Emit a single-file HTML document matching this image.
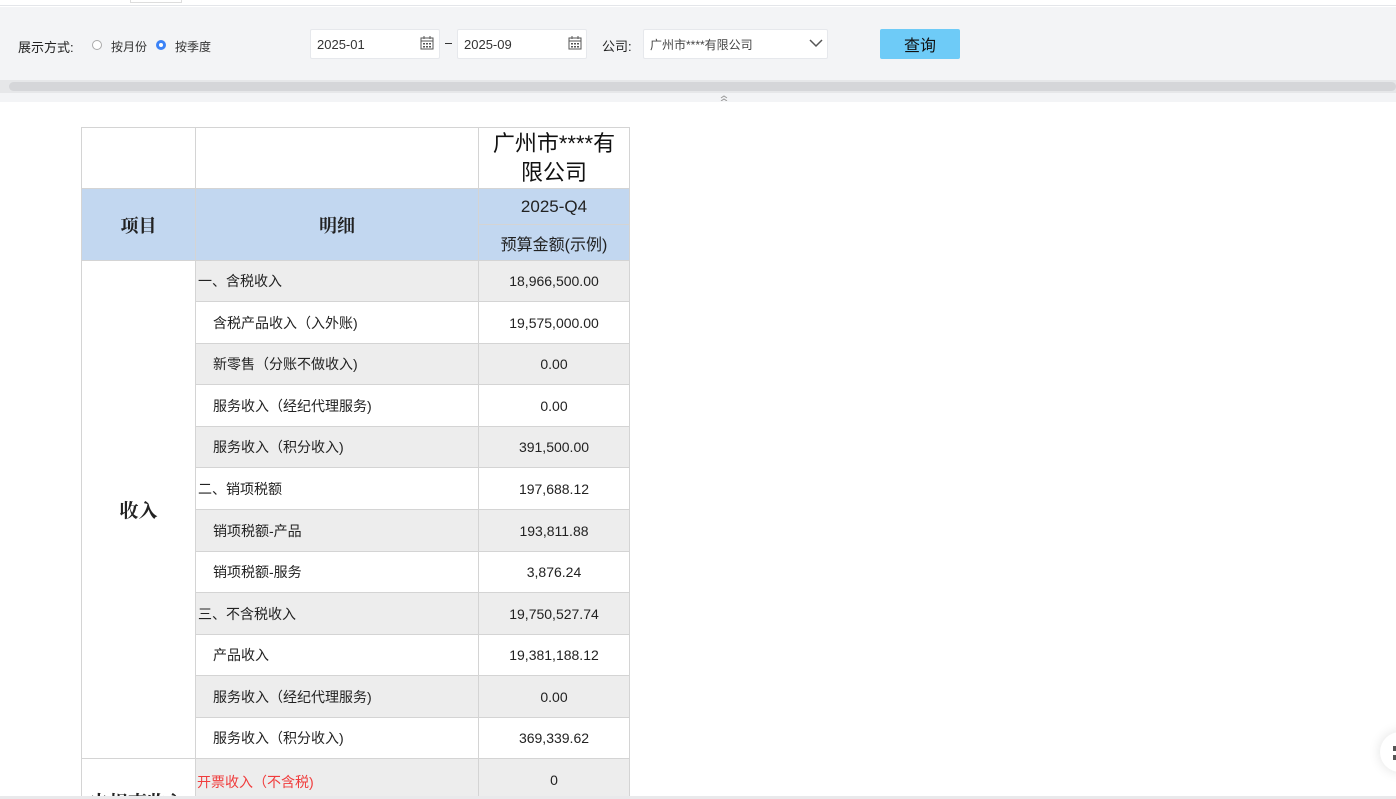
<!DOCTYPE html>
<html><head><meta charset="utf-8"><style>
*{margin:0;padding:0;box-sizing:border-box}
html,body{width:1396px;height:799px;overflow:hidden}
body{background:#fff;position:relative;font-family:"Liberation Sans","Noto Sans CJK SC",sans-serif;color:#222}
.a{position:absolute}
.c{position:absolute;border:1px solid #d4d4d4;display:flex;align-items:center;font-size:14px}
.num{justify-content:center}
.g{background:#ededed}
.hd{background:#c2d7f0}
.inp{position:absolute;top:29px;height:30px;background:#fff;border:1px solid #e6e8ec;border-radius:2px;font-size:13px;color:#333;padding-left:6px;display:flex;align-items:center}
</style></head><body>
<div class="a" style="left:0;top:0;width:1396px;height:6px;background:#fff;border-bottom:1px solid #e4e6ea"></div>
<div class="a" style="left:130px;top:0;width:52px;height:3px;border:1px solid #ddd;border-top:none"></div>
<div class="a" style="left:0;top:7px;width:1396px;height:73px;background:#f3f4f6"></div>
<div class="a" style="left:18px;top:37px;font-size:13px;color:#222">展示方式:</div>
<div class="a" style="left:92px;top:40px;width:10px;height:10px;border:1px solid #aaa;border-radius:50%;background:#fff"></div>
<div class="a" style="left:111px;top:38px;font-size:12px;color:#333">按月份</div>
<div class="a" style="left:156px;top:40px;width:10px;height:10px;border:3px solid #3b82f6;border-radius:50%;background:#fff"></div>
<div class="a" style="left:175px;top:38px;font-size:12px;color:#333">按季度</div>
<div class="inp" style="left:310px;width:130px">2025-01</div>
<svg class="a" style="left:420px;top:36px" width="14" height="14" viewBox="0 0 14 14"><rect x="1" y="2" width="12" height="11" fill="none" stroke="#555"/><path d="M4 0v3M10 0v3M1 5h12" stroke="#555"/><g fill="#555"><rect x="3" y="7" width="2" height="1.5"/><rect x="6" y="7" width="2" height="1.5"/><rect x="9" y="7" width="2" height="1.5"/><rect x="3" y="10" width="2" height="1.5"/><rect x="6" y="10" width="2" height="1.5"/><rect x="9" y="10" width="2" height="1.5"/></g></svg>
<div class="a" style="left:445px;top:43px;width:7px;height:1px;background:#333"></div>
<div class="inp" style="left:457px;width:130px">2025-09</div>
<svg class="a" style="left:568px;top:36px" width="14" height="14" viewBox="0 0 14 14"><rect x="1" y="2" width="12" height="11" fill="none" stroke="#555"/><path d="M4 0v3M10 0v3M1 5h12" stroke="#555"/><g fill="#555"><rect x="3" y="7" width="2" height="1.5"/><rect x="6" y="7" width="2" height="1.5"/><rect x="9" y="7" width="2" height="1.5"/><rect x="3" y="10" width="2" height="1.5"/><rect x="6" y="10" width="2" height="1.5"/><rect x="9" y="10" width="2" height="1.5"/></g></svg>
<div class="a" style="left:602px;top:36px;font-size:13px">公司:</div>
<div class="inp" style="left:643px;width:185px;font-size:12px;color:#444">广州市****有限公司</div>
<svg class="a" style="left:809px;top:39px" width="14" height="9" viewBox="0 0 14 9"><path d="M1 1l6 6 6-6" fill="none" stroke="#555" stroke-width="1.5"/></svg>
<div class="a" style="left:880px;top:29px;width:80px;height:30px;background:#6ecbf7;border-radius:2px;font-size:16px;display:flex;align-items:center;justify-content:center;color:#111">查询</div>
<div class="a" style="left:0;top:80px;width:1396px;height:13px;background:#e6e7e9"></div>
<div class="a" style="left:9px;top:82px;width:1387px;height:9px;background:#d5d6d9;border-radius:5px"></div>
<div class="a" style="left:0;top:93px;width:1396px;height:9px;background:#f3f4f6"></div>
<svg class="a" style="left:720px;top:95px" width="8" height="6" viewBox="0 0 8 6"><path d="M1 3l3-2 3 2M1 6l3-2 3 2" fill="none" stroke="#999"/></svg>

<div class="c" style="left:81px;top:127px;width:115px;height:62px"></div>
<div class="c" style="left:195px;top:127px;width:284px;height:62px"></div>
<div class="c num" style="left:478px;top:127px;width:152px;height:62px;font-size:22px;line-height:29px;text-align:center;color:#111">广州市****有<br>限公司</div>
<div class="c num hd" style="left:81px;top:188px;width:115px;height:73px;font-size:18px;font-weight:bold;font-family:'Noto Serif CJK SC',serif">项目</div>
<div class="c num hd" style="left:195px;top:188px;width:284px;height:73px;font-size:18px;font-weight:bold;font-family:'Noto Serif CJK SC',serif">明细</div>
<div class="c num hd" style="left:478px;top:188px;width:152px;height:37px;font-size:17px">2025-Q4</div>
<div class="c num hd" style="left:478px;top:224px;width:152px;height:37px;font-size:16px">预算金额(示例)</div>
<div class="c num" style="left:81px;top:260px;width:115px;height:499px;font-size:19px;font-weight:bold;font-family:'Noto Serif CJK SC',serif">收入</div>
<div class="c" style="left:81px;top:758px;width:115px;height:41px;overflow:hidden"><div class="a" style="left:8px;top:29px;font-size:19px;font-weight:bold;font-family:'Noto Serif CJK SC',serif;white-space:nowrap">电根事收入</div></div>

<div class="c g" style="left:195px;top:260px;width:284px;height:42px;padding-left:2px">一、含税收入</div><div class="c num g" style="left:478px;top:260px;width:152px;height:42px">18,966,500.00</div>
<div class="c" style="left:195px;top:301px;width:284px;height:43px;padding-left:17px">含税产品收入（入外账)</div><div class="c num" style="left:478px;top:301px;width:152px;height:43px">19,575,000.00</div>
<div class="c g" style="left:195px;top:343px;width:284px;height:42px;padding-left:17px">新零售（分账不做收入)</div><div class="c num g" style="left:478px;top:343px;width:152px;height:42px">0.00</div>
<div class="c" style="left:195px;top:384px;width:284px;height:43px;padding-left:17px">服务收入（经纪代理服务)</div><div class="c num" style="left:478px;top:384px;width:152px;height:43px">0.00</div>
<div class="c g" style="left:195px;top:426px;width:284px;height:42px;padding-left:17px">服务收入（积分收入)</div><div class="c num g" style="left:478px;top:426px;width:152px;height:42px">391,500.00</div>
<div class="c" style="left:195px;top:467px;width:284px;height:43px;padding-left:2px">二、销项税额</div><div class="c num" style="left:478px;top:467px;width:152px;height:43px">197,688.12</div>
<div class="c g" style="left:195px;top:509px;width:284px;height:43px;padding-left:17px">销项税额-产品</div><div class="c num g" style="left:478px;top:509px;width:152px;height:43px">193,811.88</div>
<div class="c" style="left:195px;top:551px;width:284px;height:42px;padding-left:17px">销项税额-服务</div><div class="c num" style="left:478px;top:551px;width:152px;height:42px">3,876.24</div>
<div class="c g" style="left:195px;top:592px;width:284px;height:43px;padding-left:2px">三、不含税收入</div><div class="c num g" style="left:478px;top:592px;width:152px;height:43px">19,750,527.74</div>
<div class="c" style="left:195px;top:634px;width:284px;height:42px;padding-left:17px">产品收入</div><div class="c num" style="left:478px;top:634px;width:152px;height:42px">19,381,188.12</div>
<div class="c g" style="left:195px;top:675px;width:284px;height:43px;padding-left:17px">服务收入（经纪代理服务)</div><div class="c num g" style="left:478px;top:675px;width:152px;height:43px">0.00</div>
<div class="c" style="left:195px;top:717px;width:284px;height:42px;padding-left:17px">服务收入（积分收入)</div><div class="c num" style="left:478px;top:717px;width:152px;height:42px">369,339.62</div>
<div class="c g" style="left:195px;top:758px;width:284px;height:41px;padding-left:1px;color:#f03c3c;align-items:flex-start;padding-top:13px">开票收入（不含税)</div><div class="c num g" style="left:478px;top:758px;width:152px;height:41px;align-items:flex-start;padding-top:13px">0</div>

<div class="a" style="left:1380px;top:732px;width:40px;height:40px;border-radius:50%;background:#fff;box-shadow:0 0 12px rgba(0,0,0,0.12)"></div>
<div class="a" style="left:1393px;top:746px;width:3px;height:5px;background:#555"></div>
<div class="a" style="left:1393px;top:755px;width:3px;height:5px;background:#555"></div>
<div class="a" style="left:0;top:796px;width:1396px;height:3px;background:#e9e9eb;z-index:5"></div>
</body></html>
